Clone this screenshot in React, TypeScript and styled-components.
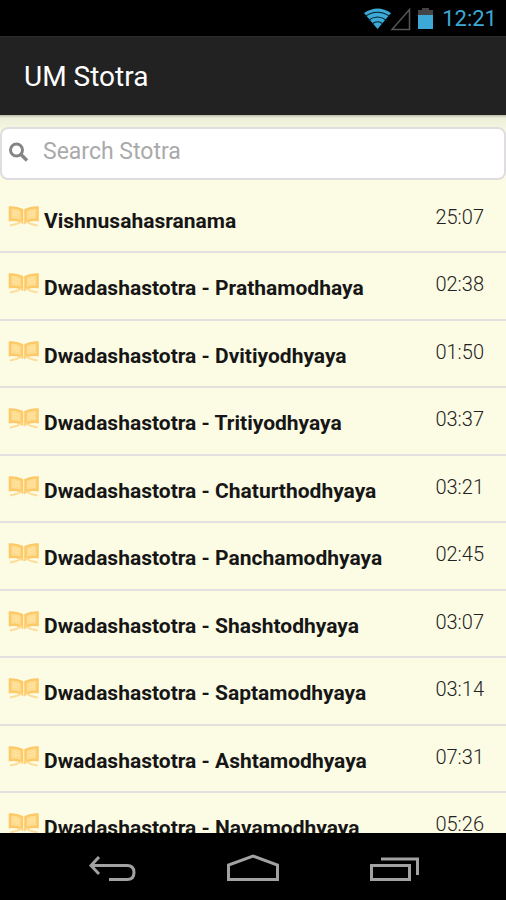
import React, { useState } from "react";
import styled, { createGlobalStyle } from "styled-components";

const GlobalStyle = createGlobalStyle`
  *, *::before, *::after { box-sizing: border-box; }
  body {
    margin: 0;
    background: #000;
    font-family: Roboto, "Liberation Sans", sans-serif;
  }
`;

const Screen = styled.div`
  display: flex;
  flex-direction: column;
  height: 100vh;
  overflow: hidden;
`;

const StatusBar = styled.div`
  flex: none;
  display: flex;
  align-items: center;
  justify-content: flex-end;
  height: 36px;
  padding: 2px 9px 0 0;
  background: #000;
  color: #3da9d6;
`;

const StatusIcons = styled.svg`
  display: block;
  margin-right: 8px;
`;

const Clock = styled.time`
  font-size: 22px;
  line-height: 32px;
`;

const TitleBar = styled.header`
  flex: none;
  display: flex;
  align-items: center;
  height: 79px;
  padding: 2px 24px 0;
  background: #222;
  border-top: 1px solid #2c2c2c;
`;

const Title = styled.h1`
  margin: 0;
  color: #fff;
  font-size: 28px;
  font-weight: 400;
  line-height: 36px;
`;

const Content = styled.main`
  flex: 1;
  min-height: 0;
  overflow: hidden;
  padding-top: 12px;
  background: linear-gradient(#b9b9ac, #eeefda 3px, #f1f2dc 9px, #fcfbe4 18px);
`;

const SearchBox = styled.label`
  display: flex;
  align-items: center;
  height: 53px;
  padding: 0 0 3px 7px;
  background: #fff;
  border: 2px solid #dfdde0;
  border-radius: 8px;
`;

const SearchInput = styled.input`
  flex: 1;
  min-width: 0;
  margin-left: 14px;
  padding: 0;
  border: 0;
  outline: 0;
  background: transparent;
  color: #333;
  font-family: inherit;
  font-size: 23px;
  line-height: 30px;

  &::placeholder {
    color: #aaa;
    opacity: 1;
  }
`;

const TrackList = styled.ul`
  margin: 6px 0 0;
  padding: 0;
  list-style: none;
`;

const TrackRow = styled.li`
  height: 67px;
  border-bottom: 2px solid #e3e1df;

  &:nth-child(even) {
    height: 68px;
  }
`;

const TrackButton = styled.button`
  display: flex;
  align-items: flex-start;
  width: 100%;
  height: 100%;
  padding: 17px 22px 0 8px;
  border: 0;
  background: transparent;
  color: #161616;
  font-family: inherit;
  text-align: left;
`;

const TrackName = styled.span`
  flex: 1;
  padding: 4px 0 0 5px;
  font-size: 21px;
  font-weight: 700;
  line-height: 28px;
  white-space: nowrap;
`;

const Duration = styled.span`
  color: #222;
  font-size: 20px;
  font-weight: 300;
  line-height: 28px;
`;

const NavBar = styled.nav`
  flex: none;
  display: flex;
  justify-content: center;
  gap: 77px;
  height: 67px;
  padding-top: 18px;
  background: #000;
`;

const NavButton = styled.button`
  width: 64px;
  height: 34px;
  padding: 0;
  border: 0;
  background: transparent;

  svg {
    display: block;
    margin: 0 auto;
  }
`;

const BookIcon = () => (
  <svg width="31" height="25" viewBox="0 0 31 25" fill="none" aria-hidden="true">
    <path d="M2 4.500Q8 4 14 7V19Q9 16 2 17Z" fill="#fddd90" stroke="#fdca69" strokeWidth="2.600" />
    <path d="M29.500 4.500Q23 4 17.500 7V19Q22 16 29.500 17Z" fill="#fddd90" stroke="#fdca69" strokeWidth="2.600" />
    <path d="M5 8.500l6 1.500M5 11.500l6 1.500M27 8.500l-6 1.500M27 11.500l-6 1.500" stroke="#fee6aa" />
    <path d="M2 22.500q7-1 12-4M29.500 22.500q-7-1-12-4" stroke="#fddc94" strokeWidth="2" />
  </svg>
);

const SearchIcon = () => (
  <svg width="20" height="20" viewBox="0 0 20 20" fill="none" stroke="#858585" aria-hidden="true">
    <circle cx="7.5" cy="8" r="6" strokeWidth="3" />
    <path d="M12 12.5l6 6" strokeWidth="3.4" />
  </svg>
);

const tracks = [
  ["Vishnusahasranama", "25:07"],
  ["Dwadashastotra - Prathamodhaya", "02:38"],
  ["Dwadashastotra - Dvitiyodhyaya", "01:50"],
  ["Dwadashastotra - Tritiyodhyaya", "03:37"],
  ["Dwadashastotra - Chaturthodhyaya", "03:21"],
  ["Dwadashastotra - Panchamodhyaya", "02:45"],
  ["Dwadashastotra - Shashtodhyaya", "03:07"],
  ["Dwadashastotra - Saptamodhyaya", "03:14"],
  ["Dwadashastotra - Ashtamodhyaya", "07:31"],
  ["Dwadashastotra - Navamodhyaya", "05:26"],
];

export default function App() {
  const [query, setQuery] = useState("");
  const visible = tracks.filter(([name]) => name.toLowerCase().includes(query.toLowerCase()));

  return (
    <Screen>
      <GlobalStyle />
      <StatusBar>
        <StatusIcons width="70" height="24" viewBox="0 0 70 24" fill="none" aria-hidden="true">
          <path d="M0 6Q13.500-3 27 6L13.500 22Z" fill="#3da9d6" />
          <path d="M1 9.500Q13.500 1 26 9.500M4 13.500Q13.500 6.500 23 13.500M8 17Q13.500 12.500 19 17" stroke="#06202c" strokeWidth="1.200" />
          <path d="M28 22.500H45.500V2.500Z" stroke="#555" strokeWidth="1.500" />
          <path d="M54 3h4V1h7v2h4v5H54Z" fill="#444" />
          <path d="M54 8h15v14H54Z" fill="#3da9d6" />
        </StatusIcons>
        <Clock>12:21</Clock>
      </StatusBar>
      <TitleBar>
        <Title>UM Stotra</Title>
      </TitleBar>
      <Content>
        <SearchBox>
          <SearchIcon />
          <SearchInput
            type="text"
            aria-label="Search Stotra"
            placeholder="Search Stotra"
            value={query}
            onChange={(e) => setQuery(e.target.value)}
          />
        </SearchBox>
        <TrackList>
          {visible.map(([name, time]) => (
            <TrackRow key={name}>
              <TrackButton type="button">
                <BookIcon />
                <TrackName>{name}</TrackName>
                <Duration>{time}</Duration>
              </TrackButton>
            </TrackRow>
          ))}
        </TrackList>
      </Content>
      <NavBar>
        <NavButton type="button" aria-label="Back">
          <svg width="48" height="34" viewBox="0 0 48 34" fill="none" stroke="#a2a2a2" strokeWidth="3">
            <path d="M3 14.500H39Q46 14.500 46 21.500T39 28.500H21M11 6L3 14.500L11 23" />
          </svg>
        </NavButton>
        <NavButton type="button" aria-label="Home">
          <svg width="54" height="34" viewBox="0 0 54 34" fill="none" stroke="#a2a2a2" strokeWidth="3">
            <path d="M2.500 28.500V14L27 5L51.500 14V28.500Z" />
          </svg>
        </NavButton>
        <NavButton type="button" aria-label="Recent apps">
          <svg width="50" height="34" viewBox="0 0 50 34" fill="none" stroke="#a2a2a2" strokeWidth="3">
            <path d="M2.500 14.500H40.500V28.500H2.500ZM12 8H48.500V24" />
          </svg>
        </NavButton>
      </NavBar>
    </Screen>
  );
}
